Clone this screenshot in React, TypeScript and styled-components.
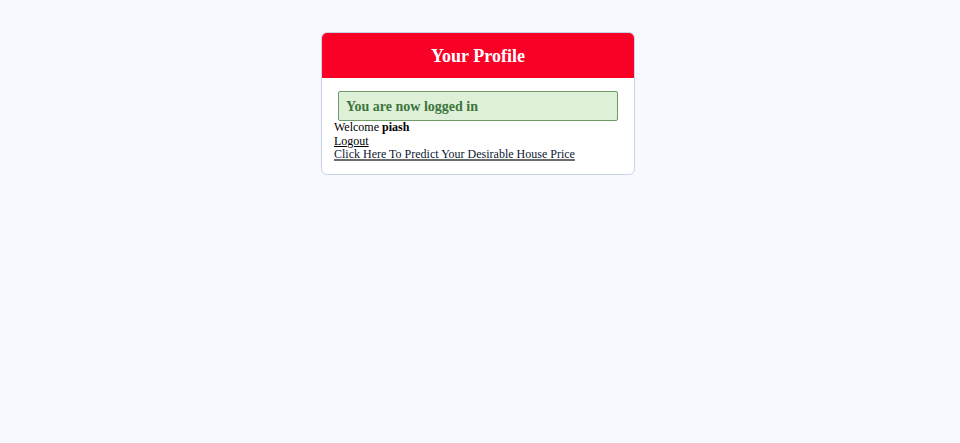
import React from "react";
import styled, { createGlobalStyle } from "styled-components";

const Global = createGlobalStyle`
  html, body { margin: 0; padding: 0; background: #f8f9ff; }
  body { font-family: "Liberation Serif", "Times New Roman", serif; color: #000; }
`;

const Page = styled.div`
  min-height: 443px;
  display: flex;
  justify-content: center;
  align-items: flex-start;
  padding-top: 32px;
  padding-right: 4px;
  box-sizing: border-box;
`;

const Card = styled.div`
  width: 314px;
  box-sizing: border-box;
  background: #ffffff;
  border: 1px solid #c9d4e6;
  border-radius: 6px;
  overflow: hidden;
`;

const Header = styled.div`
  background: #f90026;
  height: 45px;
  display: flex;
  align-items: center;
  justify-content: center;
`;

const Title = styled.h2`
  margin: 0;
  color: #ffffff;
  font-size: 18px;
  font-weight: bold;
  padding-top: 1px;
`;

const Body = styled.div`
  padding: 13px 12px 12px 12px;
  font-size: 12px;
  line-height: 13.6px;
`;

const Alert = styled.div`
  margin: 0 4px 0 4px;
  height: 30px;
  box-sizing: border-box;
  background: #dff0d8;
  border: 1px solid #6f9c66;
  border-radius: 2px;
  color: #3c763d;
  font-weight: bold;
  font-size: 14px;
  display: flex;
  align-items: center;
  padding: 1px 0 0 7px;
`;

const Line = styled.div``;

const Link = styled.a<{ $strong?: boolean }>`
  color: ${(p) => (p.$strong ? "#0b1733" : "#000")};
  text-decoration: underline;
  text-decoration-color: ${(p) => (p.$strong ? "#6b6b6b" : "#000")};
  text-decoration-thickness: ${(p) => (p.$strong ? "2px" : "1px")};
  cursor: pointer;
`;

export default function App() {
  return (
    <>
      <Global />
      <Page>
        <Card>
          <Header>
            <Title>Your Profile</Title>
          </Header>
          <Body>
            <Alert>You are now logged in</Alert>
            <Line>
              Welcome <b>piash</b>
            </Line>
            <Line>
              <Link href="#">Logout</Link>
            </Line>
            <Line>
              <Link href="#" $strong>
                Click Here To Predict Your Desirable House Price
              </Link>
            </Line>
          </Body>
        </Card>
      </Page>
    </>
  );
}
